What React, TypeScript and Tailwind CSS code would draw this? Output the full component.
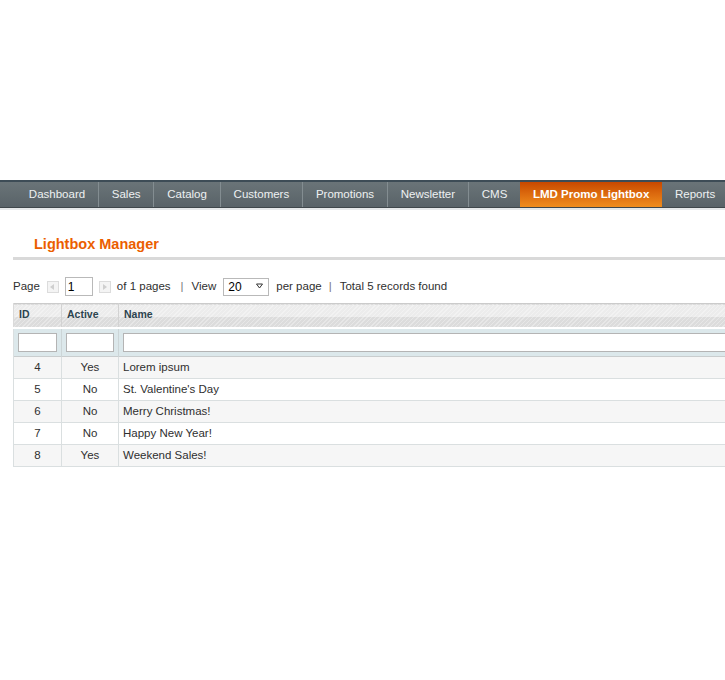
import React from "react";

const NAV = ["Dashboard", "Sales", "Catalog", "Customers", "Promotions", "Newsletter", "CMS", "LMD Promo Lightbox", "Reports"];
const ACTIVE_NAV = "LMD Promo Lightbox";

const ROWS = [
  { id: 4, active: "Yes", name: "Lorem ipsum" },
  { id: 5, active: "No", name: "St. Valentine's Day" },
  { id: 6, active: "No", name: "Merry Christmas!" },
  { id: 7, active: "No", name: "Happy New Year!" },
  { id: 8, active: "Yes", name: "Weekend Sales!" },
];

function ArrowBox({ dir }: { dir: "left" | "right" }) {
  return (
    <span className="inline-flex items-center justify-center w-[12px] h-[12px] border border-[#dcdcdc] bg-[#f4f4f4]">
      <svg width="5" height="6" viewBox="0 0 5 6">
        {dir === "left" ? <polygon points="4,0 4,6 0,3" fill="#cfcfcf" /> : <polygon points="1,0 1,6 5,3" fill="#cfcfcf" />}
      </svg>
    </span>
  );
}

export default function App() {
  return (
    <div className="w-[725px] h-[680px] bg-white overflow-hidden font-['Liberation_Sans',Arial,sans-serif] text-[#2f2f2f]">
      <div className="h-[180px]" />

      {/* top menu */}
      <div className="border-t-2 border-[#3d4c56] border-b border-b-[#3f474b] bg-gradient-to-b from-[#6a7478] to-[#596368] h-[28px] flex pl-[16px] w-[800px]">
        {NAV.map((item, i) => {
          const active = item === ACTIVE_NAV;
          const prevActive = NAV[i - 1] === ACTIVE_NAV;
          return (
            <div
              key={item}
              className={`flex items-center px-[12.85px] text-[11.5px] ${
                i > 0 && !active && !prevActive ? "border-l border-[#838d91]" : ""
              } ${
                active
                  ? "bg-gradient-to-b from-[#c84800] to-[#f08d1d] text-white font-bold"
                  : "text-[#eef1f2]"
              }`}
            >
              {item}
            </div>
          );
        })}
      </div>
      <div className="h-[2px] bg-[#e6e9ea]" />

      <div className="pl-[13px]">
        {/* header */}
        <div className="pl-[21px] pt-[26px] pb-[5px]">
          <h3 className="text-[14.5px] font-bold text-[#eb5e00] leading-[16px]">Lightbox Manager</h3>
        </div>
        <div className="h-[3px] bg-[#d9d9d9]" />

        {/* pager */}
        <div className="flex items-center mt-[17px] h-[19px] text-[11.5px] text-[#2f2f2f] whitespace-nowrap">
          <span>Page</span>
          <span className="ml-[7px]"><ArrowBox dir="left" /></span>
          <span className="ml-[6px] w-[28px] h-[19px] border border-[#b9b9b9] bg-white pl-[2px] flex items-center text-[12px] text-[#000]">1</span>
          <span className="ml-[6px]"><ArrowBox dir="right" /></span>
          <span className="ml-[6px]">of 1 pages</span>
          <span className="ml-[10px] text-[#777]">|</span>
          <span className="ml-[8px]">View</span>
          <span className="ml-[7px] w-[46px] h-[18px] border border-[#b9b9b9] bg-white flex items-center justify-between pl-[4px] pr-[5px] text-[12px] text-[#000]">
            20
            <svg width="7" height="7" viewBox="0 0 7 7">
              <polygon points="0.5,1 6.5,1 3.5,5" fill="none" stroke="#333" strokeWidth="1" />
            </svg>
          </span>
          <span className="ml-[7px]">per page</span>
          <span className="ml-[7px] text-[#777]">|</span>
          <span className="ml-[8px]">Total 5 records found</span>
        </div>

        {/* grid */}
        <table className="mt-[7px] w-[800px] border-collapse table-fixed">
          <colgroup>
            <col className="w-[48px]" />
            <col className="w-[57px]" />
            <col />
          </colgroup>
          <thead>
            <tr className="h-[24px] border-t border-[#cbcbcb] bg-[repeating-linear-gradient(135deg,rgba(255,255,255,0.3)_0px,rgba(255,255,255,0.3)_1px,transparent_1px,transparent_3px),linear-gradient(#ececec_0,#ececec_52%,#dcdcdc_52%,#dcdcdc_100%)]">
              {["ID", "Active", "Name"].map((h, i) => (
                <th
                  key={h}
                  className={`text-left pl-[5px] text-[10.5px] font-bold text-[#2d444f] ${i > 0 ? "border-l border-[#d2d2d2]" : "border-l border-[#dadada]"}`}
                >
                  {h}
                </th>
              ))}
            </tr>
            <tr className="h-[29px] bg-[#dce8eb] border-t-[2px] border-t-white border-b border-b-[#c9cdce]">
              <th className="px-[4px] border-l border-[#dadfe0]">
                <div className="h-[19px] border border-[#b4b4b4] bg-white" />
              </th>
              <th className="px-[4px] border-l border-[#ccd5d7]">
                <div className="h-[19px] border border-[#b4b4b4] bg-white" />
              </th>
              <th className="pl-[4px] border-l border-[#ccd5d7]">
                <div className="h-[19px] border border-[#b4b4b4] bg-white" />
              </th>
            </tr>
          </thead>
          <tbody className="text-[11.5px] text-[#2f2f2f]">
            {ROWS.map((r, i) => (
              <tr key={r.id} className={`h-[22px] border-b border-[#dadfe0] ${i % 2 === 0 ? "bg-[#f6f6f6]" : "bg-white"}`}>
                <td className="text-center border-l border-[#dadfe0]">{r.id}</td>
                <td className="text-center border-l border-[#dadfe0]">{r.active}</td>
                <td className="pl-[4px] border-l border-[#dadfe0]">{r.name}</td>
              </tr>
            ))}
          </tbody>
        </table>
      </div>
    </div>
  );
}
